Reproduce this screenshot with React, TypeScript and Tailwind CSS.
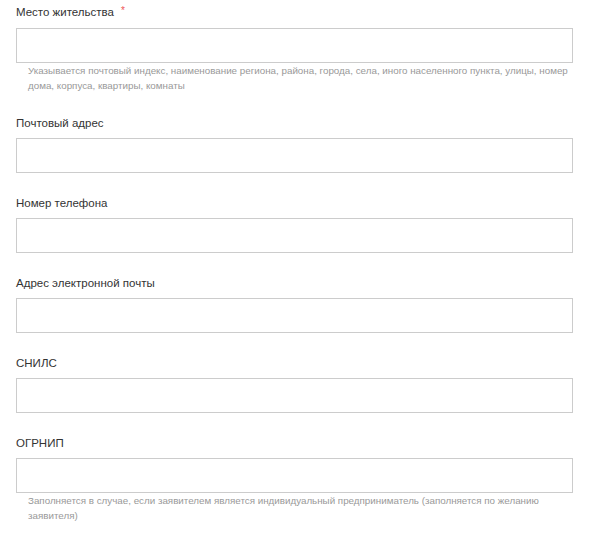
import React from 'react';

interface Field {
  id: string;
  label: string;
  required?: boolean;
  hint?: string;
}

const fields: Field[] = [
  {
    id: 'address',
    label: 'Место жительства',
    required: true,
    hint: 'Указывается почтовый индекс, наименование региона, района, города, села, иного населенного пункта, улицы, номер дома, корпуса, квартиры, комнаты',
  },
  { id: 'postal', label: 'Почтовый адрес' },
  { id: 'phone', label: 'Номер телефона' },
  { id: 'email', label: 'Адрес электронной почты' },
  { id: 'snils', label: 'СНИЛС' },
  {
    id: 'ogrnip',
    label: 'ОГРНИП',
    hint: 'Заполняется в случае, если заявителем является индивидуальный предприниматель (заполняется по желанию заявителя)',
  },
];

const App: React.FC = () => {
  return (
    <div className="min-h-screen bg-white px-4 pt-[4px] font-['Liberation_Sans',Arial,sans-serif]">
      <div className="w-[557px] flex flex-col gap-[22px]">
        {fields.map((f) => (
          <div key={f.id} className="flex flex-col">
            <label htmlFor={f.id} className="text-[11.5px] leading-4 text-[#333]">
              {f.label}
              {f.required && <span className="ml-[7px] relative -top-[2px] text-[10px] text-[#e55]">*</span>}
            </label>
            <input
              id={f.id}
              type="text"
              className="mt-[7px] h-[35px] w-full border border-[#ccc] bg-white px-2 text-[12px] outline-none"
            />
            {f.hint && (
              <p className="pl-3 text-[9.8px] leading-[15px] text-[#999]">{f.hint}</p>
            )}
          </div>
        ))}
      </div>
    </div>
  );
};

export default App;
